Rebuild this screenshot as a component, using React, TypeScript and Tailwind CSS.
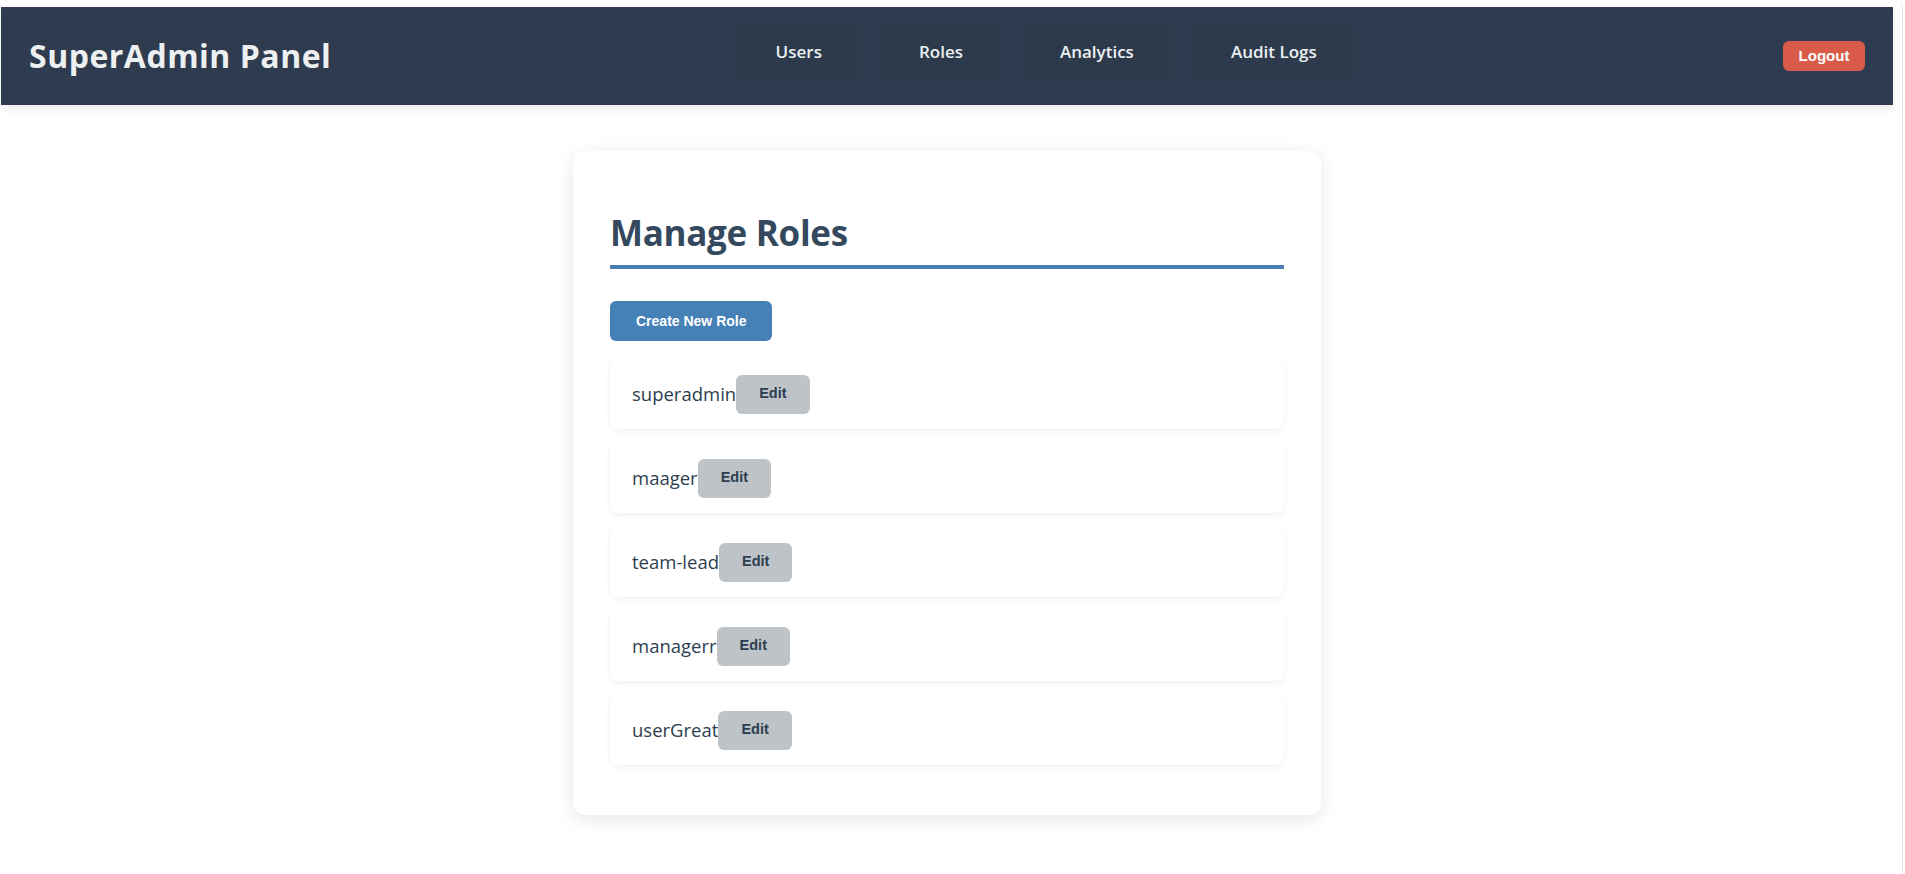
const roles = ["superadmin", "maager", "team-lead", "managerr", "userGreat"];

const navLinks = ["Users", "Roles", "Analytics", "Audit Logs"];

function Navbar() {
  return (
    <nav className="flex h-[98px] w-[1892px] items-center justify-between bg-[#2f3c4f] px-7 shadow-[0_4px_8px_rgba(0,0,0,0.08)]">
      <h1 className="text-[32px] font-bold tracking-[0.5px] text-[#ecf0f1]">SuperAdmin Panel</h1>
      <ul className="-ml-[22px] -mt-2 flex gap-[23px]">
        {navLinks.map((link) => (
          <li key={link}>
            <a className="block rounded-lg bg-[#2d3a4c] px-[37px] py-[15px] text-[17px] font-semibold text-[#ecf0f1] shadow-[0_1px_3px_rgba(0,0,0,0.06)]">
              {link}
            </a>
          </li>
        ))}
      </ul>
      <button className="h-[30px] w-[82px] rounded-md bg-[#d95a49] text-[15px] font-bold text-white [font-family:'Liberation_Sans',Arial,sans-serif]">
        Logout
      </button>
    </nav>
  );
}

function RoleRow({ name }: { name: string }) {
  return (
    <li className="flex h-[70px] items-center rounded-lg bg-white px-[22px] shadow-[0_2px_6px_rgba(0,0,0,0.06)]">
      <span className="text-[18.5px] font-medium text-[#2c3e50]">{name}</span>
      <button className="flex h-[39px] items-center rounded-md bg-[#bdc3c7] px-[23px] text-[14.5px] font-bold text-[#2c3e50] [font-family:'Liberation_Sans',Arial,sans-serif]">
        Edit
      </button>
    </li>
  );
}

export default function App() {
  return (
    <div className="min-h-screen w-[1903px] rounded-tr-lg border-r border-[#e6e6e6] bg-white pl-[1px] pt-[7px] [font-family:'Open_Sans','Noto_Sans',sans-serif]">
      <Navbar />
      <main className="flex w-[1892px] justify-center pt-[46px]">
        <section className="w-[748px] rounded-xl bg-white px-[37px] pb-[50px] pt-[58px] shadow-[0_4px_18px_rgba(0,0,0,0.1)]">
          <h2 className="border-b-4 border-[#4a7fb5] pb-[8px] text-[35px] leading-[48px] font-bold tracking-[-0.3px] text-[#34495e]">
            Manage Roles
          </h2>
          <button className="mt-[32px] h-[40px] rounded-md bg-[#4580b6] px-[26px] text-[14px] font-bold text-white [font-family:'Liberation_Sans',Arial,sans-serif]">
            Create New Role
          </button>
          <ul className="mt-[18px] flex flex-col gap-[14px]">
            {roles.map((r) => (
              <RoleRow key={r} name={r} />
            ))}
          </ul>
        </section>
      </main>
    </div>
  );
}
